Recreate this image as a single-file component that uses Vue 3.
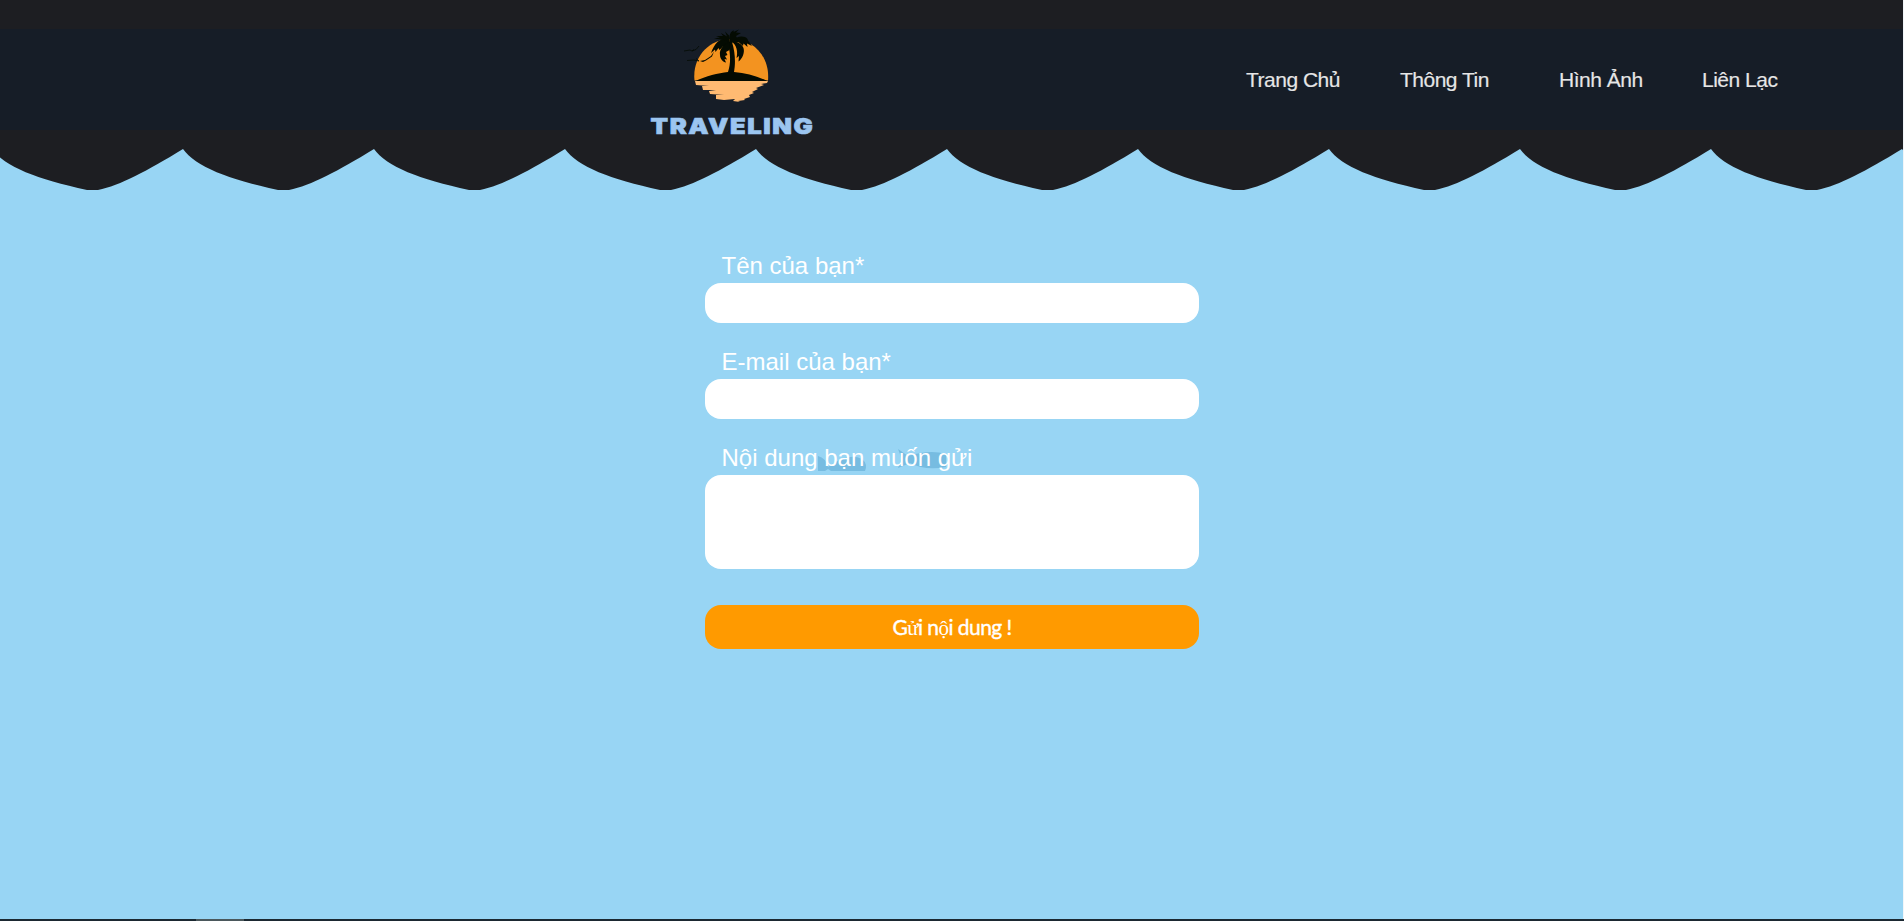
<script setup>
const links = ['Trang Chủ', 'Thông Tin', 'Hình Ảnh', 'Liên Lạc']
</script>

<template>
  <div class="page">
    <header class="header">
      <nav class="nav">
        <svg class="logo" width="170" height="120" viewBox="645 25 170 120">
          <path fill="#f39320" d="M694.500 80.500C692 57 709 39 731 39C754 39 770 57 768 80.500Z" />
          <path fill="#ffba72" d="M695 81H768L767 83L761 84L764 85L756 88L758 89L752 92L754 93L749 95L750 97L744 99L745 100L738 101L740 102L733 101L735 99L724 100L716 99V95L724 95L710 94L709 91L716 90L703 90L702 86L709 86L696 85Z" />
          <g fill="#040b02">
            <path d="M695.500 81C706 76 718 73 728 72C731 63 730.500 53 728 44L732 42C735.500 53 735.500 64 734 72C746 73 757 76 767.500 81Z" />
            <path d="M731 43C725 35 716 39 711 53L715 49.500L715.500 52L718.500 48L719.500 50L723 46.500L725 48Z" />
            <path d="M730 42C724 44 719 49 720 55C720 59 723 62 726 62.500L724.500 59L727 59.500L725 56L727.500 55L726 52L729.500 50Z" />
            <path d="M731 41C737 45 738 52 736.500 58L739 56L738.500 61.500C742 59 745 53 743.500 48C742 44 737 41 731 41Z" />
            <path d="M731 42C736 36 744 35 747.500 39L748 40.500L752 46L747 43.500L747.500 47L743.500 43.500L743 46L739 42.500Z" />
            <path d="M730 43C728 35 731 31 734 30.500L733.500 32L739 29.500L736 32.500L741 33L736 36L737 38L732 43Z" />
            <path d="M730 42L724 40L714 38.500L720 37.500L716 36L723 36L721 33L727 36.500L725 31.500L729 35.500Z" />
            <path d="M700 61L705 60L711 56L714 51.500L712 56.500L706 60.500L703 62Z" />
          </g>
          <path class="bird" d="M687 60.500L694 60L699 61L696 58.500M684 51L690 50L692 51L694 49.500M692 51L696 49.500L699 46" />
          <text class="brand" x="650.500" y="134" textLength="164" lengthAdjust="spacingAndGlyphs">TRAVELING</text>
        </svg>
        <ul class="links">
          <li v-for="link in links" :key="link"><a>{{ link }}</a></li>
        </ul>
      </nav>
      <svg class="waves" width="1903" height="41" viewBox="0 0 1903 41">
        <defs>
          <pattern id="wave" x="-8" y="0" width="191" height="41" patternUnits="userSpaceOnUse">
            <path fill="#1d1e22" d="M0 0C13 18 45 30 95 41H106C128 36.500 155 22 191 0Z" />
          </pattern>
        </defs>
        <rect width="1903" height="41" fill="url(#wave)" />
      </svg>
    </header>

    <form class="form">
      <label>Tên của bạn*</label>
      <input type="text" />
      <label>E-mail của bạn*</label>
      <input type="text" />
      <label class="message">
        <svg class="fish" width="130" height="24" viewBox="816 450 130 24">
          <path fill="#77bce1" d="M816 457Q824 459 826 468Q846 453 860 460Q866 465 863 472H829L826 470L823 472H816Z" />
          <path fill="#77bce1" d="M896 450L906 457Q928 450 944 455V468Q923 472 908 464L896 469Q901 460 896 450Z" />
        </svg>
        <span>Nội dung bạn muốn gửi</span>
      </label>
      <textarea></textarea>
      <button type="button">G<i>ử</i>i n<i>ộ</i>i dung !</button>
    </form>

    <footer class="footer"><div class="block"></div></footer>
  </div>
</template>

<style>
body {
  margin: 0;
  background: #f1f5f8;
}
</style>

<style scoped>
.page {
  display: flex;
  flex-direction: column;
  height: 921px;
  overflow: hidden;
  font-family: "Liberation Sans", Arial, sans-serif;
  background: linear-gradient(to right, #98d5f4 1903px, #f1f5f8 1903px);
}
.header {
  width: 1903px;
  height: 190px;
  display: flex;
  flex-direction: column;
}
.nav {
  box-sizing: border-box;
  height: 149px;
  padding: 25px 125px 0 645px;
  display: flex;
  justify-content: space-between;
  background: linear-gradient(#1d1e22 29.500px, #161d27 29.500px, #161d27 130px, #1d1e22 130px);
}
.logo {
  flex: none;
}
.bird {
  fill: none;
  stroke: #040b02;
  stroke-width: 0.8px;
}
.brand {
  font: 900 22px Inter, sans-serif;
  letter-spacing: 1.4px;
  fill: #9bc5f0;
  stroke: #9bc5f0;
  stroke-width: 0.7px;
}
.waves {
  display: block;
}
.links {
  display: grid;
  grid-template-columns: 154px 159px 143px 76px;
  list-style: none;
  margin: 43px 0 0;
  padding: 0;
  font-size: 21px;
  letter-spacing: -0.5px;
  line-height: 23px;
  color: #e6e6e6;
  -webkit-text-stroke: 0.15px #e6e6e6;
  white-space: nowrap;
}
.form {
  width: 494px;
  margin: 61px 0 0 705px;
  display: flex;
  flex-direction: column;
}
label {
  height: 32px;
  line-height: 29px;
  padding-left: 16.5px;
  font-size: 24px;
  color: #fff;
}
input,
textarea {
  box-sizing: border-box;
  width: 494px;
  height: 40px;
  margin: 0 0 24px;
  padding: 8px 16px;
  border: 0;
  border-radius: 16px;
  background: #fff;
  resize: none;
}
textarea {
  height: 94px;
  margin-bottom: 36px;
}
.message {
  position: relative;
}
.message span {
  position: relative;
}
.fish {
  position: absolute;
  left: 113px;
  top: 6px;
}
button {
  height: 44px;
  padding: 0;
  border: 0;
  border-radius: 16px;
  background: #ff9a00;
  color: #fff;
  font: 400 21px Lato, sans-serif;
  letter-spacing: -0.55px;
  -webkit-text-stroke: 0.4px #fff;
}
button i {
  font: 400 21px "Liberation Serif", serif;
  -webkit-text-stroke: 0;
}
.footer {
  height: 2px;
  margin-top: auto;
  background: #1b2831;
}
.block {
  width: 48px;
  height: 2px;
  margin-left: 196px;
  background: #4b585c;
}
</style>
